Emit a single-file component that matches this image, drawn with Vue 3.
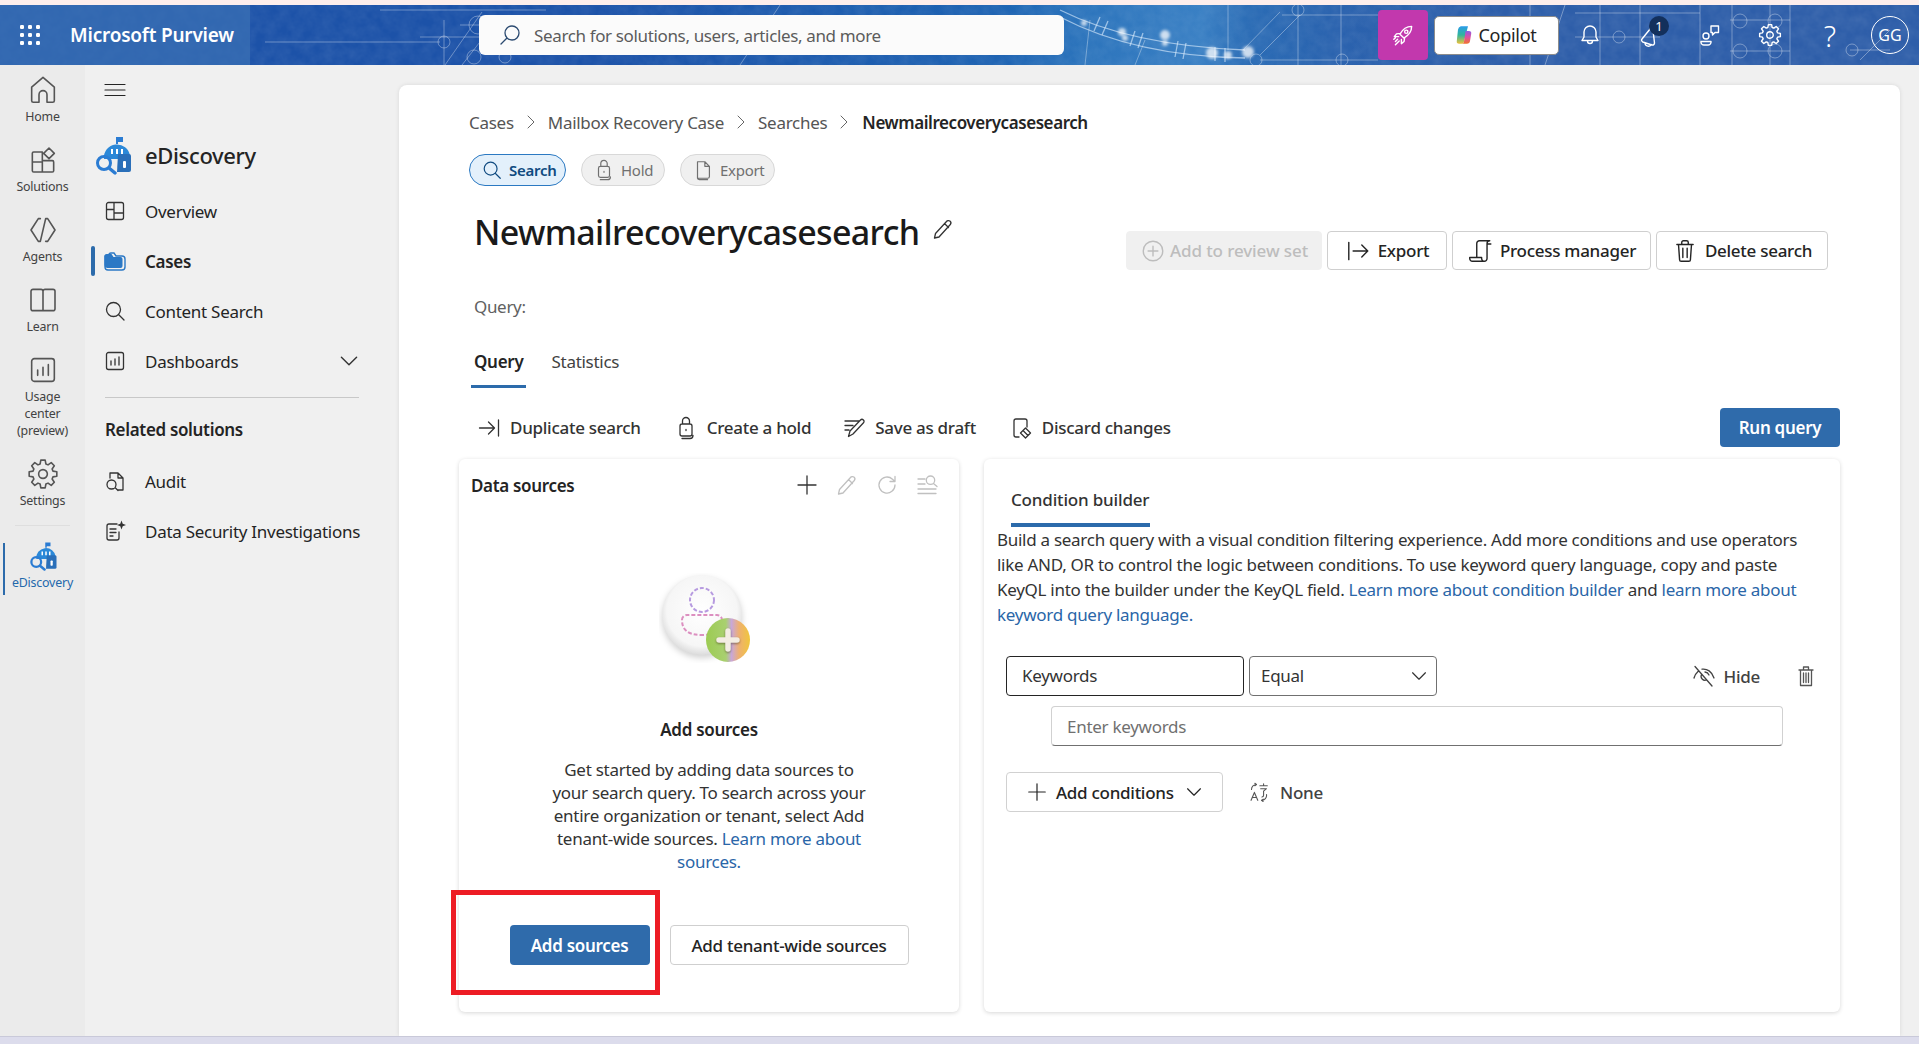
<script setup>
const icons = {
  home: 'M12 2.5 L3.5 9.8 V20 a1.2 1.2 0 0 0 1.2 1.2 H9 V15.5 a3 3 0 0 1 6 0 V21.2 h4.3 a1.2 1.2 0 0 0 1.2-1.2 V9.8 Z',
  solutions: 'M11.5 6 H5 a1 1 0 0 0-1 1 v13 a1 1 0 0 0 1 1 h14 a1 1 0 0 0 1-1 v-6.5 a1 1 0 0 0-1-1 H11.5 Z M4 13.5 h7.5 M11.5 13.5 V21 M16.5 3 l4 4 -4 4 -4-4 Z',
  agents: 'M10 3.5 H8.5 L3 12 L8.5 20.5 H10 L14 3.5 H15.5 L21 12 L15.5 20.5 H14',
  learn: 'M4.5 4 h6 a1.5 1.5 0 0 1 1.5 1.5 V20 H4.5 a1.5 1.5 0 0 1-1.5-1.5 V5.5 A1.5 1.5 0 0 1 4.5 4 Z M19.5 4 h-6 A1.5 1.5 0 0 0 12 5.5 V20 h7.5 a1.5 1.5 0 0 0 1.5-1.5 V5.5 A1.5 1.5 0 0 0 19.5 4 Z',
  usage: 'M5.5 3.5 h13 a2 2 0 0 1 2 2 v13 a2 2 0 0 1-2 2 h-13 a2 2 0 0 1-2-2 v-13 a2 2 0 0 1 2-2 Z M8 16 v-4 M12 16 v-6 M16 16 V8',
  overview: 'M5.5 3.5 h13 a2 2 0 0 1 2 2 v13 a2 2 0 0 1-2 2 h-13 a2 2 0 0 1-2-2 v-13 a2 2 0 0 1 2-2 Z M11 3.5 V20.5 M3.5 10.5 H11 M11 14 H20.5',
  search: 'M10.5 3.5 a7 7 0 1 0 0 14 a7 7 0 0 0 0-14 Z M15.5 15.5 L21 21',
  topSearch: 'M14 3 a7 7 0 1 1 0 14 a7 7 0 0 1 0-14 Z M9 15 L3 21',
  chevDown: 'M5 8.5 L12 15.5 L19 8.5',
  chevRight: 'M8 4 L16 12 L8 20',
  audit: 'M7 9 V4 h8 l5 5 v12 h-5 M15 4 v5 h5 M8.5 11 a4.5 4.5 0 1 0 0 9 a4.5 4.5 0 0 0 0-9 Z M12 18.5 L15 21.5',
  dsi: 'M14 5 H6 a2 2 0 0 0-2 2 v12 a2 2 0 0 0 2 2 h8 a2 2 0 0 0 2-2 v-6 M7 10 h6 M7 13.5 h6 M7 17 h3',
  spark: 'M18.5 1.5 l1.2 3.3 3.3 1.2 -3.3 1.2 -1.2 3.3 -1.2-3.3 -3.3-1.2 3.3-1.2 Z',
  lock: 'M8.5 8 V5 a3.5 3.5 0 0 1 7 0 V8 M8 8 h8 a2 2 0 0 1 2 2 v8 a2 2 0 0 1-2 2 H8 a2 2 0 0 1-2-2 v-8 a2 2 0 0 1 2-2 Z M12 13.5 v1 M8 22.5 h8 a3 3 0 0 0 3-3',
  doc: 'M6 3 h8 l5 5 v11 a2 2 0 0 1-2 2 H6 Z M14 3 v5 h5 M6 19 v1.5 a2 2 0 0 0 2 2 h9',
  pencil: 'M15.5 4.5 a2.4 2.4 0 0 1 3.8 3 L8 20 L3.5 21 L4.5 16.5 Z M13.5 6.5 L17.5 10.5',
  plus: 'M12 3 V21 M3 12 H21',
  plusCircle: 'M12 3 a9 9 0 1 1 0 18 a9 9 0 0 1 0-18 Z M12 7.5 V16.5 M7.5 12 H16.5',
  exportArrow: 'M3.5 4 V20 M7.5 12 H21 M15.5 6.5 L21 12 L15.5 17.5',
  process: 'M9 18 V5 a2.5 2.5 0 0 1 2.5-2.5 H21 a2.5 2.5 0 0 0-2.5 2.5 V19 a2.5 2.5 0 0 1-2.5 2.5 H5 A2.5 2.5 0 0 1 2.5 19 V18 h11 v1 a2.5 2.5 0 0 0 2.5 2.5 M18.5 5.5 H22',
  trash: 'M4.5 6 H19.5 M9 6 V4 a1.5 1.5 0 0 1 1.5-1.5 h3 A1.5 1.5 0 0 1 15 4 V6 M6 6 L7 20 a1.5 1.5 0 0 0 1.5 1.5 h7 A1.5 1.5 0 0 0 17 20 L18 6 M10 9.5 V18 M14 9.5 V18',
  duplicate: 'M2.5 12 H17 M11.5 6 L17.5 12 L11.5 18 M21.5 4 V20',
  draft: 'M3 5 h14 M3 9.5 h8 M3 14 h4 M18.5 4 a2 2 0 0 1 3 2.8 L11 18 L6.5 20.5 L8 15 Z',
  discard: 'M10 21 H7 a2 2 0 0 1-2-2 V5 a2 2 0 0 1 2-2 h9 a2 2 0 0 1 2 2 v6 M16.5 12 l5 5 -5 5 -5-5 Z M14 14.5 l5 5',
  refresh: 'M20 12 a8 8 0 1 1-2.5-5.8 L20 8.5 M20 3.5 V8.5 H15',
  searchList: 'M3 6 h7 M3 11 h7 M3 16 h18 M3 20.5 h18 M15.5 3 a4.2 4.2 0 1 0 0 8.4 a4.2 4.2 0 0 0 0-8.4 Z M18.5 10.5 L22 13.5',
  hide: 'M3 2.5 L20 22 M6 7.5 C3.8 9.5 2.5 11.5 2 14 M10 5.2 C15 4.5 20 7.5 22 14 M9.5 10.5 a4 4 0 0 0 5 5.5 M17 11 a5 5 0 0 0-4-3',
  binFill: 'M5 6 H19 M9.5 6 V3 h5 V6 M6.5 6 V21.5 h11 V6 M9.5 9 V18.5 M12 9 V18.5 M14.5 9 V18.5',
  bell: 'M12 3 a6 6 0 0 1 6 6 v5 l2 3.5 H4 L6 14 V9 a6 6 0 0 1 6-6 Z M9.5 18 a2.5 2.5 0 0 0 5 0',
  mega: 'M14.5 3 L4 16 a2 2 0 0 0 .8 3 L14 22 a2 2 0 0 0 2.5-2 Z M7 20 a3.5 3.5 0 0 0 6.5 1.5',
  feedback: 'M8 10 a3 3 0 1 1 0 6 a3 3 0 0 1 0-6 Z M3 18.5 h10 v1 a3 3 0 0 1-3 2.5 H6 a3 3 0 0 1-3-2.5 Z M13 3 h7.5 v6.5 H17 l-2.5 2.5 V9.5 H13 Z',
  rocket: 'M20 4 c-4.5 0-8.2 2.4-10.8 7.2 l3.6 3.6 C17.6 12.2 20 8.5 20 4 Z M9.5 10.5 L6 11 l-2 2.5 h4 M13.5 14.5 L13 18 l-2.5 2 v-4 M15 7.5 a1.5 1.5 0 1 0 0 3 a1.5 1.5 0 0 0 0-3 Z M7 16 l-2 2 M8.5 17.5 l-3.5 3.5 M5 14.5 l-1.5 1.5',
  none: 'M6.5 12.5 L2.5 22 M6.5 12.5 L10.5 22 M4 18.5 H9 M13 4.5 h9 M17.5 2 v2.5 M14 8 h7 l-3.5 3 M17.5 11 v5 a2 2 0 0 1-2 2 M3 9 a6 6 0 0 1 6-6 M9 3 l-2-1.5 M9 3 l-2 1.5 M21 15 a6 6 0 0 1-6 7 M15 22 l2 1.5 M15 22 l2-1.5',
  hamburger: 'M2 6.5 H22 M2 12 H22 M2 17.5 H22'
}

function gear(cx, cy, rOuter, rInner, teeth) {
  const pts = []
  const step = (Math.PI * 2) / teeth
  for (let i = 0; i < teeth; i++) {
    const a = i * step
    const offs = [[-0.36, rInner], [-0.2, rOuter], [0.2, rOuter], [0.36, rInner]]
    for (const [o, r] of offs) {
      pts.push(`${(cx + r * Math.cos(a + o * step)).toFixed(2)} ${(cy + r * Math.sin(a + o * step)).toFixed(2)}`)
    }
  }
  const hole = rInner * 0.42
  return `M${pts.join(' L')} Z M${cx - hole} ${cy} a${hole} ${hole} 0 1 0 ${hole * 2} 0 a${hole} ${hole} 0 1 0 ${-hole * 2} 0 Z`
}
const gearD = gear(12, 12, 10.5, 7.8, 8)

const railItems = [
  { label: ['Home'], icon: icons.home },
  { label: ['Solutions'], icon: icons.solutions },
  { label: ['Agents'], icon: icons.agents },
  { label: ['Learn'], icon: icons.learn },
  { label: ['Usage', 'center', '(preview)'], icon: icons.usage },
  { label: ['Settings'], icon: gearD }
]

const crumbs = ['Cases', 'Mailbox Recovery Case', 'Searches']

// Blueprint artwork of the banner; coordinates are those of the banner itself.
const bpLines = [
  'M380 5 H546', 'M265 37 H440', 'M445 60 L482 7', 'M462 60 L490 24', 'M444 15 V60',
  'M420 32 H500', 'M460 20 H500', 'M780 0 L740 60',
  'M1228 0 V45', 'M1243 45 L1280 7', 'M1260 50 L1300 10', 'M1298 0 V60', 'M1341 0 V60', 'M1282 10 H1378', 'M1260 55 H1378',
  'M1090 15 L1085 60', 'M1145 35 L1135 60',
  'M1600 0 V60', 'M1640 0 V60', 'M1700 0 V60', 'M1732 0 V60', 'M1770 0 V60', 'M1790 0 V60',
  'M1730 15 H1790', 'M1730 46 H1790', 'M1575 32 H1660', 'M1575 8 H1700',
  'M1860 55 L1890 25', 'M1850 45 H1890', 'M1565 0 L1545 60', 'M1530 0 V60'
]
const bpCircles = [
  [444, 37, 6], [478, 20, 9], [474, 52, 7], [505, 52, 6], [1740, 16, 7], [1775, 16, 7], [1740, 46, 7], [1775, 46, 7],
  [1619, 32, 6], [1852, 45, 6], [1298, 5, 6], [1256, 55, 6], [1342, 55, 6]
]
const bpGlints = [[1084, 18, 3], [1122, 27, 4], [1125, 33, 3], [1165, 30, 5], [1165, 38, 3], [1212, 48, 6], [1228, 50, 4], [1248, 47, 6]]
const bpTies = [
  'M1100 12 l-6 14', 'M1108 16 l-6 14', 'M1135 26 l-5 15', 'M1143 28 l-5 15', 'M1178 36 l-3 16', 'M1186 38 l-3 16',
  'M1215 42 v14', 'M1225 43 v14'
]
</script>

<template>
  <div class="app">
    <div class="strip"></div>

    <header class="header">
      <svg class="blueprint" viewBox="0 0 1919 60" preserveAspectRatio="none" aria-hidden="true">
        <defs>
          <filter id="mottle" x="0" y="0" width="100%" height="100%">
            <feTurbulence type="fractalNoise" baseFrequency="0.09" numOctaves="3" seed="7" />
            <feColorMatrix type="matrix" values="0 0 0 0 1  0 0 0 0 1  0 0 0 0 1  0.5 0 0 0 -0.12" />
          </filter>
          <filter id="soft" x="-50%" y="-50%" width="200%" height="200%">
            <feGaussianBlur stdDeviation="1.4" />
          </filter>
        </defs>
        <rect x="0" y="0" width="1919" height="60" filter="url(#mottle)" class="mottle" />
        <g class="bp">
          <path v-for="(d, i) in bpLines" :key="'l' + i" :d="d" />
          <circle v-for="(c, i) in bpCircles" :key="'c' + i" :cx="c[0]" :cy="c[1]" :r="c[2]" />
        </g>
        <g class="beam">
          <path d="M1060 5 C1110 30 1170 42 1245 45" />
          <path d="M1060 12 C1110 38 1170 52 1245 53" />
          <path v-for="(d, i) in bpTies" :key="'t' + i" :d="d" />
        </g>
        <circle v-for="(g, i) in bpGlints" :key="'g' + i" :cx="g[0]" :cy="g[1]" :r="g[2]" class="glint" filter="url(#soft)" />
      </svg>

      <div class="brand">
        <svg class="waffle" viewBox="0 0 20 20" aria-hidden="true">
          <g>
            <rect v-for="n in 9" :key="n" :x="(n - 1) % 3 * 8" :y="Math.floor((n - 1) / 3) * 8" width="4" height="4" rx="1.2" />
          </g>
        </svg>
        <span class="brand-name">Microsoft Purview</span>
      </div>

      <div class="topsearch">
        <svg class="ic topsearch-ic" viewBox="0 0 24 24"><path :d="icons.topSearch" /></svg>
        <span>Search for solutions, users, articles, and more</span>
      </div>

      <div class="top-actions">
        <div class="rocket">
          <svg class="ic rocket-ic" viewBox="0 0 24 24"><path :d="icons.rocket" /></svg>
        </div>
        <div class="copilot">
          <svg class="copilot-logo" viewBox="0 0 20 24" aria-hidden="true">
            <defs>
              <linearGradient id="cpA" x1="0" y1="0" x2="0" y2="1">
                <stop offset="0" stop-color="#2a9bea" />
                <stop offset="0.5" stop-color="#30b59c" />
                <stop offset="1" stop-color="#efc13a" />
              </linearGradient>
              <linearGradient id="cpB" x1="0" y1="0" x2="0" y2="1">
                <stop offset="0" stop-color="#8e5ce2" />
                <stop offset="0.5" stop-color="#e0509e" />
                <stop offset="1" stop-color="#f0752c" />
              </linearGradient>
            </defs>
            <path d="M6 1 h9 l-5 19 a3 3 0 0 1-3 3 H4 a3 3 0 0 1-3-3.5 L2.5 5 A5 5 0 0 1 6 1 Z" fill="url(#cpA)" />
            <path d="M12 7 h4 a3 3 0 0 1 3 3.5 l-1.5 9 A4 4 0 0 1 13.5 23 H7 a3 3 0 0 0 3-3 Z" fill="url(#cpB)" />
          </svg>
          <span>Copilot</span>
        </div>
        <div class="top-icon"><svg class="ic" viewBox="0 0 24 24"><path :d="icons.bell" /></svg></div>
        <div class="top-icon has-badge">
          <svg class="ic" viewBox="0 0 24 24"><path :d="icons.mega" /></svg>
          <span class="badge">1</span>
        </div>
        <div class="top-icon"><svg class="ic" viewBox="0 0 24 24"><path :d="icons.feedback" /></svg></div>
        <div class="top-icon"><svg class="ic" viewBox="0 0 24 24"><path :d="gearD" /></svg></div>
        <div class="top-icon help">?</div>
        <div class="avatar">GG</div>
      </div>
    </header>

    <div class="body">
      <aside class="rail">
        <div v-for="item in railItems" :key="item.label[0]" class="rail-item">
          <svg class="ic rail-ic" viewBox="0 0 24 24"><path :d="item.icon" /></svg>
          <div class="rail-label">
            <div v-for="l in item.label" :key="l">{{ l }}</div>
          </div>
        </div>
        <div class="rail-sep"></div>
        <div class="rail-item rail-active">
          <span class="rail-bar"></span>
          <svg class="rail-logo" viewBox="0 0 40 40" aria-hidden="true">
            <path d="M23 2 h7 v5 h-5 v2 h-2 Z" fill="#2b7cd3" />
            <path d="M11 24 a13 13 0 0 1 26 -3 v3 Z" fill="#2b88d8" />
            <path d="M25 19 h11 a2 2 0 0 1 2 2 v14 a2 2 0 0 1-2 2 H24 Z" fill="#2a6fb9" />
            <path d="M19 14 v5 M24 14 v5 M29 14 v5" class="logo-lines" />
            <rect x="30" y="26" width="3" height="7" rx="1" fill="#fff" />
            <circle cx="11" cy="28" r="6.5" class="logo-lens" />
            <path d="M16 33 L22 38" class="logo-handle" />
          </svg>
          <div class="rail-label rail-label-active">eDiscovery</div>
        </div>
      </aside>

      <nav class="nav">
        <svg class="ic hamburger" viewBox="0 0 24 24"><path :d="icons.hamburger" /></svg>
        <div class="nav-title">
          <svg class="nav-logo" viewBox="0 0 40 40" aria-hidden="true">
            <path d="M23 2 h7 v5 h-5 v2 h-2 Z" fill="#2b7cd3" />
            <path d="M11 24 a13 13 0 0 1 26 -3 v3 Z" fill="#2b88d8" />
            <path d="M25 19 h11 a2 2 0 0 1 2 2 v14 a2 2 0 0 1-2 2 H24 Z" fill="#2a6fb9" />
            <path d="M19 14 v5 M24 14 v5 M29 14 v5" class="logo-lines" />
            <rect x="30" y="26" width="3" height="7" rx="1" fill="#fff" />
            <circle cx="11" cy="28" r="6.5" class="logo-lens" />
            <path d="M16 33 L22 38" class="logo-handle" />
          </svg>
          <span>eDiscovery</span>
        </div>
        <div class="nav-item">
          <svg class="ic nav-ic" viewBox="0 0 24 24"><path :d="icons.overview" /></svg>
          <span>Overview</span>
        </div>
        <div class="nav-item active">
          <span class="nav-bar"></span>
          <svg class="nav-ic" viewBox="0 0 24 24" aria-hidden="true">
            <path d="M6 6 a2 2 0 0 1 2 -2 h3 l2 3 h6 a3 3 0 0 1 3 3 v8 a3 3 0 0 1-3 3 H5 a3 3 0 0 1-3-3 V7 Z" fill="none" stroke="#2b78c5" stroke-width="1.4" />
            <path d="M1.5 7 a2 2 0 0 1 2-2 h5 l2 3 h7 a2 2 0 0 1 2 2 v7 a2 2 0 0 1-2 2 H4 a3 3 0 0 1-2.5-3 Z" fill="#2b78c5" />
          </svg>
          <span>Cases</span>
        </div>
        <div class="nav-item">
          <svg class="ic nav-ic" viewBox="0 0 24 24"><path :d="icons.search" /></svg>
          <span>Content Search</span>
        </div>
        <div class="nav-item">
          <svg class="ic nav-ic" viewBox="0 0 24 24"><path :d="icons.usage" /></svg>
          <span>Dashboards</span>
          <svg class="ic nav-chev" viewBox="0 0 24 24"><path :d="icons.chevDown" /></svg>
        </div>
        <div class="nav-sep"></div>
        <div class="nav-head">Related solutions</div>
        <div class="nav-item nav-after-head">
          <svg class="ic nav-ic" viewBox="0 0 24 24"><path :d="icons.audit" /></svg>
          <span>Audit</span>
        </div>
        <div class="nav-item">
          <svg class="ic nav-ic" viewBox="0 0 24 24"><path :d="icons.dsi" /><path :d="icons.spark" class="solid" /></svg>
          <span>Data Security Investigations</span>
        </div>
      </nav>

      <main class="card">
        <div class="crumbs">
          <template v-for="c in crumbs" :key="c">
            <span>{{ c }}</span>
            <svg class="ic crumb-sep" viewBox="0 0 24 24"><path :d="icons.chevRight" /></svg>
          </template>
          <span class="crumb-cur">Newmailrecoverycasesearch</span>
        </div>

        <div class="pills">
          <div class="pill pill-on">
            <svg class="ic pill-ic" viewBox="0 0 24 24"><path :d="icons.search" /></svg>
            <span>Search</span>
          </div>
          <div class="pill pill-hold">
            <svg class="ic pill-ic" viewBox="0 0 24 24"><path :d="icons.lock" /></svg>
            <span>Hold</span>
          </div>
          <div class="pill pill-exp">
            <svg class="ic pill-ic" viewBox="0 0 24 24"><path :d="icons.doc" /></svg>
            <span>Export</span>
          </div>
        </div>

        <div class="title-row">
          <h1 class="title">Newmailrecoverycasesearch</h1>
          <svg class="ic title-pen" viewBox="0 0 24 24"><path :d="icons.pencil" /></svg>
          <div class="actions">
            <button class="btn btn-disabled">
              <svg class="ic btn-ic" viewBox="0 0 24 24"><path :d="icons.plusCircle" /></svg>
              Add to review set
            </button>
            <button class="btn btn-export">
              <svg class="ic btn-ic" viewBox="0 0 24 24"><path :d="icons.exportArrow" /></svg>
              Export
            </button>
            <button class="btn btn-process">
              <svg class="ic btn-ic" viewBox="0 0 24 24"><path :d="icons.process" /></svg>
              Process manager
            </button>
            <button class="btn btn-delete">
              <svg class="ic btn-ic" viewBox="0 0 24 24"><path :d="icons.trash" /></svg>
              Delete search
            </button>
          </div>
        </div>

        <div class="query-label">Query:</div>

        <div class="tabs">
          <div class="tab tab-on">Query</div>
          <div class="tab">Statistics</div>
        </div>

        <div class="toolbar">
          <div class="tool tool-dup">
            <svg class="ic tool-ic" viewBox="0 0 24 24"><path :d="icons.duplicate" /></svg>
            <span>Duplicate search</span>
          </div>
          <div class="tool tool-hold">
            <svg class="ic tool-ic" viewBox="0 0 24 24"><path :d="icons.lock" /></svg>
            <span>Create a hold</span>
          </div>
          <div class="tool tool-draft">
            <svg class="ic tool-ic" viewBox="0 0 24 24"><path :d="icons.draft" /></svg>
            <span>Save as draft</span>
          </div>
          <div class="tool tool-discard">
            <svg class="ic tool-ic" viewBox="0 0 24 24"><path :d="icons.discard" /></svg>
            <span>Discard changes</span>
          </div>
          <button class="run">Run query</button>
        </div>

        <div class="panels">
          <section class="panel panel-left">
            <div class="panel-head">
              <span class="panel-title">Data sources</span>
              <div class="panel-tools">
                <svg class="ic ptool dark" viewBox="0 0 24 24"><path :d="icons.plus" /></svg>
                <svg class="ic ptool" viewBox="0 0 24 24"><path :d="icons.pencil" /></svg>
                <svg class="ic ptool" viewBox="0 0 24 24"><path :d="icons.refresh" /></svg>
                <svg class="ic ptool" viewBox="0 0 24 24"><path :d="icons.searchList" /></svg>
              </div>
            </div>

            <svg class="art" viewBox="0 0 100 90" aria-hidden="true">
              <defs>
                <radialGradient id="disc" cx="0.5" cy="0.45" r="0.55">
                  <stop offset="0" stop-color="#ffffff" />
                  <stop offset="0.8" stop-color="#f6f6f6" />
                  <stop offset="1" stop-color="#dcdcdc" />
                </radialGradient>
                <linearGradient id="badge" x1="0" y1="0" x2="1" y2="0">
                  <stop offset="0" stop-color="#9ccb52" />
                  <stop offset="0.45" stop-color="#a9d070" />
                  <stop offset="0.58" stop-color="#c9a7d8" />
                  <stop offset="0.75" stop-color="#eeb070" />
                  <stop offset="1" stop-color="#f0c63c" />
                </linearGradient>
              </defs>
              <circle cx="43" cy="42" r="40" fill="url(#disc)" class="art-disc" />
              <circle cx="43" cy="27" r="12" class="dash-purple" />
              <path d="M23 47 a5 5 0 0 1 5-5 h30 a5 5 0 0 1 5 5 c0 10-6 15-20 15 s-20-5-20-15 Z" class="dash-pink" />
              <circle cx="69" cy="67" r="22" fill="url(#badge)" />
              <path d="M69 58 V76 M60 67 H78" class="art-plus" />
            </svg>

            <div class="src-title">Add sources</div>
            <p class="src-text">
              Get started by adding data sources to<br />
              your search query. To search across your<br />
              entire organization or tenant, select Add<br />
              tenant-wide sources. <a class="link">Learn more about<br />sources.</a>
            </p>
            <div class="src-btns">
              <button class="primary">Add sources</button>
              <button class="secondary">Add tenant-wide sources</button>
            </div>
            <div class="callout"></div>
          </section>

          <section class="panel panel-right">
            <div class="cb-tab">Condition builder</div>
            <p class="cb-text">
              Build a search query with a visual condition filtering experience. Add more conditions and use operators<br />
              like AND, OR to control the logic between conditions. To use keyword query language, copy and paste<br />
              KeyQL into the builder under the KeyQL field. <a class="link">Learn more about condition builder</a> and <a class="link">learn more about<br />keyword query language.</a>
            </p>
            <div class="cond-row">
              <div class="field field-key">Keywords</div>
              <div class="field field-op">
                <span>Equal</span>
                <svg class="ic op-chev" viewBox="0 0 24 24"><path :d="icons.chevDown" /></svg>
              </div>
              <div class="hide">
                <svg class="ic hide-ic" viewBox="0 0 24 24"><path :d="icons.hide" /></svg>
                <span>Hide</span>
              </div>
              <svg class="ic bin" viewBox="0 0 24 24"><path :d="icons.binFill" /></svg>
            </div>
            <div class="keywords">Enter keywords</div>
            <div class="add-row">
              <button class="add-cond">
                <svg class="ic add-plus" viewBox="0 0 24 24"><path :d="icons.plus" /></svg>
                <span>Add conditions</span>
                <svg class="ic add-chev" viewBox="0 0 24 24"><path :d="icons.chevDown" /></svg>
              </button>
              <svg class="ic none-ic" viewBox="0 0 24 24"><path :d="icons.none" /></svg>
              <span class="none-label">None</span>
            </div>
          </section>
        </div>
      </main>
    </div>

    <div class="bottom"></div>
  </div>
</template>

<style>
html, body { margin: 0; padding: 0; background: #f0f0f0; }
</style>

<style scoped>
.app {
  width: 1919px;
  height: 1044px;
  overflow: hidden;
  display: flex;
  flex-direction: column;
  background: #f0f0f0;
  font-family: "Noto Sans", "Open Sans", sans-serif;
  font-size: 17px;
  letter-spacing: -0.28px;
  color: #242424;
}
.ic { fill: none; stroke: currentColor; stroke-width: 1.3; stroke-linejoin: round; stroke-linecap: round; display: block; flex: none; }
.solid { fill: currentColor; stroke: none; }
button { font: inherit; letter-spacing: inherit; color: inherit; cursor: default; }

.strip { height: 5px; background: #fdeeec; flex: none; }

.header {
  position: relative;
  flex: none;
  height: 60px;
  display: flex;
  align-items: center;
  background: linear-gradient(90deg, #1c52a8 0, #1c52a8 600px, #1e63b2 1000px, #2c74bc 1080px, #3a80c4 1200px, #2b6cb5 1250px, #2a62ae 1340px, #2e5ea9 1500px, #2e5ea9 100%);
  color: #fff;
}
.blueprint { position: absolute; inset: 0; width: 100%; height: 100%; }
.mottle { opacity: 0.22; }
.bp { fill: none; stroke: rgba(255, 255, 255, 0.34); stroke-width: 1; }
.beam { fill: none; stroke: rgba(225, 240, 255, 0.6); stroke-width: 1.3; }
.glint { fill: rgba(255, 255, 255, 0.75); }

.brand {
  position: relative;
  width: 250px;
  height: 100%;
  flex: none;
  display: flex;
  align-items: center;
  background: rgba(58, 112, 180, 0.72);
}
.waffle { width: 20px; height: 20px; margin-left: 20px; fill: #fff; }
.brand-name { margin-left: 30px; font-size: 19px; font-weight: 600; letter-spacing: -0.2px; }

.topsearch {
  position: relative;
  margin-left: 229px;
  width: 585px;
  height: 40px;
  border-radius: 6px;
  background: #fbfbfb;
  display: flex;
  align-items: center;
  color: #5c5c5c;
  font-size: 17px;
  letter-spacing: -0.36px;
  flex: none;
}
.topsearch-ic { width: 24px; height: 24px; margin-left: 19px; margin-right: 12px; color: #2b4a70; }

.top-actions { position: relative; flex: 1; display: flex; align-items: center; height: 100%; margin-left: 314px; }
.rocket { width: 50px; height: 50px; background: #c238ad; border-radius: 4px; display: flex; align-items: center; justify-content: center; flex: none; }
.rocket-ic { width: 26px; height: 26px; color: #fff; }
.copilot {
  width: 125px; height: 39px; margin-left: 6px; box-sizing: border-box; background: #fff;
  border: 1px solid #8c8c8c; border-radius: 5px; display: flex; align-items: center; justify-content: center;
  color: #242424; font-size: 18px; flex: none; gap: 6px;
}
.copilot-logo { width: 16px; height: 20px; }
.top-icon { position: relative; width: 60px; flex: none; display: flex; justify-content: center; align-items: center; color: #fff; }
.top-icon .ic { width: 24px; height: 24px; stroke-width: 1.4; }
.copilot + .top-icon { margin-left: 1px; }
.help { font-size: 29px; font-weight: 300; line-height: 1; letter-spacing: 0; }
.badge {
  position: absolute; left: 29px; top: -7px; width: 20px; height: 20px; border-radius: 50%; background: #13305c;
  color: #fff; font-size: 13px; line-height: 20px; text-align: center; letter-spacing: 0;
}
.avatar {
  margin-left: 11px; width: 38px; height: 38px; box-sizing: border-box; border: 1px solid #fff; border-radius: 50%;
  display: flex; align-items: center; justify-content: center; font-size: 16px; letter-spacing: 0; flex: none;
}

.body { flex: 1; min-height: 0; display: flex; }

.rail { width: 85px; flex: none; background: #ebebeb; color: #424242; }
.rail-item { position: relative; padding: 10px 0 10px; display: flex; flex-direction: column; align-items: center; }
.rail-ic { width: 32px; height: 32px; margin: -1px 0; color: #555; stroke-width: 1.2; }
.rail-label { margin-top: 3px; font-size: 12.4px; line-height: 17px; text-align: center; letter-spacing: -0.2px; }
.rail-sep { height: 1px; margin: 6px 15px 7px; background: #dedede; }
.rail-active { padding-top: 8px; }
.rail-bar { position: absolute; left: 3px; top: 10px; bottom: 6px; width: 2px; background: #2c6bab; }
.rail-logo { width: 30px; height: 30px; }
.rail-label-active { color: #2368ab; }
.logo-lines { fill: none; stroke: #fff; stroke-width: 2; }
.logo-lens { fill: none; stroke: #2b7cd3; stroke-width: 3; }
.logo-handle { fill: none; stroke: #2b7cd3; stroke-width: 3.4; stroke-linecap: round; }

.nav { width: 314px; flex: none; background: #f0f0f0; box-sizing: border-box; padding-left: 20px; color: #242424; }
.hamburger { width: 24px; height: 24px; margin: 13px 0 0 -2px; stroke-width: 1.2; stroke: #242424; }
.nav-title { display: flex; align-items: center; height: 40px; margin-top: 33px; margin-left: -12px; font-size: 22px; font-weight: 500; letter-spacing: -0.35px; }
.nav-logo { width: 40px; height: 40px; margin-right: 12px; flex: none; }
.nav-item { position: relative; height: 50px; display: flex; align-items: center; color: #242424; }
.nav-title + .nav-item { margin-top: 11px; }
.nav-ic { width: 24px; height: 24px; margin-left: -2px; margin-right: 18px; color: #333; flex: none; }
.nav-item.active { font-weight: 600; }
.nav-bar { position: absolute; left: -14px; top: 10px; width: 4px; height: 30px; border-radius: 2px; background: #2c6bab; }
.nav-chev { width: 26px; height: 26px; margin-left: auto; margin-right: 37px; color: #333; }
.nav-sep { height: 1px; background: #c8c8c8; margin: 11px 40px 0 0; width: 254px; }
.nav-head { height: 50px; margin-top: 6px; display: flex; align-items: center; font-weight: 600; letter-spacing: -0.33px; }
.nav-after-head { margin-top: 2px; }

.card {
  flex: none;
  width: 1501px;
  margin-top: 20px;
  box-sizing: border-box;
  padding: 25px 60px 0 70px;
  background: #fff;
  border-radius: 8px 8px 0 0;
  box-shadow: 0 0 4px rgba(0, 0, 0, 0.1);
}
.crumbs { display: flex; align-items: center; height: 24px; color: #555; }
.crumb-sep { width: 18px; height: 18px; margin: 0 8px; color: #555; stroke-width: 1.2; }
.crumb-cur { color: #242424; font-weight: 600; letter-spacing: -0.43px; margin-left: 1px; }

.pills { display: flex; margin-top: 20px; gap: 15px; }
.pill {
  height: 32px; box-sizing: border-box; padding: 0 0 0 11px; display: flex; align-items: center; gap: 6px; border-radius: 16px;
  border: 1px solid #d8d8d8; background: #f0f0f0; color: #707070; font-size: 15px;
}
.pill-ic { width: 22px; height: 22px; }
.pill-on { width: 97px; border-color: #2b79c2; background: #e3f0fb; color: #0f4a80; font-weight: 600; }
.pill-hold { width: 84px; }
.pill-exp { width: 95px; }

.title-row { display: flex; margin-top: 22px; height: 62px; padding-top: 1px; box-sizing: border-box; }
.title { margin: 0 0 0 5px; font-size: 34px; font-weight: 500; line-height: 46px; letter-spacing: -0.66px; color: #1a1a1a; }
.title-pen { width: 24px; height: 24px; margin: 8px 0 0 12px; color: #333; }
.actions { margin-left: auto; margin-right: 12px; margin-top: 22px; display: flex; gap: 5px; height: 39px; }
.btn {
  box-sizing: border-box; height: 39px; display: flex; align-items: center; justify-content: center; gap: 7px; padding: 0;
  border: 1px solid #cfcfcf; border-radius: 4px; background: #fff; color: #242424; font-size: 17px; font-weight: 500;
}
.btn-ic { width: 26px; height: 26px; }
.btn-disabled { width: 196px; background: #f0f0f0; border-color: #f0f0f0; color: #bdbdbd; font-weight: 500; gap: 4px; letter-spacing: -0.1px; }
.btn-export { width: 120px; }
.btn-process { width: 199px; }
.btn-delete { width: 172px; }

.query-label { margin: 25px 0 0 5px; line-height: 24px; color: #616161; letter-spacing: -0.33px; }

.tabs { display: flex; margin: 31px 0 0 2px; gap: 22px; }
.tab { padding: 0 3px 14px; line-height: 24px; color: #424242; }
.tab-on { color: #242424; font-weight: 600; border-bottom: 3px solid #2c6bab; padding-bottom: 11px; }

.toolbar { display: flex; align-items: center; height: 39px; margin-top: 20px; font-weight: 500; color: #333; }
.tool { display: flex; align-items: center; gap: 9px; }
.tool-ic { width: 24px; height: 24px; }
.tool-dup { margin-left: 8px; }
.tool-hold { margin-left: 33px; }
.tool-draft { margin-left: 31px; }
.tool-discard { margin-left: 33px; }
.run {
  margin-left: auto; width: 120px; height: 39px; border: none; border-radius: 4px; background: #2f6bab; color: #fff; font-weight: 600;
}

.panels { display: flex; gap: 25px; margin: 12px 0 0 -10px; height: 553px; }
.panel { position: relative; box-sizing: border-box; background: #fff; border-radius: 6px; box-shadow: 0 1px 4px rgba(0, 0, 0, 0.16); }
.panel-left { width: 500px; flex: none; display: flex; flex-direction: column; align-items: center; }
.panel-right { flex: 1; min-width: 0; }

.panel-head { align-self: stretch; display: flex; align-items: center; justify-content: space-between; height: 24px; padding: 14px 12px 1px 12px; }
.panel-title { font-weight: 600; color: #242424; letter-spacing: -0.33px; }
.panel-tools { display: flex; margin-top: -1px; }
.ptool { width: 24px; height: 24px; padding: 0 8px; color: #c0c0c0; }
.ptool.dark { color: #333; }

.art { width: 100px; height: 90px; margin-top: 75px; flex: none; }
.art-disc { filter: drop-shadow(0 3px 3px rgba(0, 0, 0, 0.18)); }
.dash-purple { fill: none; stroke: #b79be0; stroke-width: 2; stroke-dasharray: 4 2; }
.dash-pink { fill: none; stroke: #dc8fc0; stroke-width: 2; stroke-dasharray: 4 2; }
.art-plus { fill: none; stroke: #f3ede3; stroke-width: 5.5; stroke-linecap: round; filter: drop-shadow(0 1.5px 1px rgba(60, 50, 20, 0.55)); }

.src-title { margin-top: 55px; line-height: 24px; font-weight: 600; }
.src-text { margin: 16px 0 0; text-align: center; line-height: 23px; color: #333; }
.link { color: #2a66a8; }
.src-btns { display: flex; gap: 20px; margin-top: 52px; }
.primary { width: 140px; height: 40px; border: none; border-radius: 4px; background: #2f6bab; color: #fff; font-weight: 600; }
.secondary { width: 239px; height: 40px; border: 1px solid #cfcfcf; border-radius: 4px; background: #fff; font-weight: 500; color: #242424; }
.callout { position: absolute; left: -8px; top: 431px; width: 209px; height: 105px; box-sizing: border-box; border: 5px solid #ed1c24; pointer-events: none; }

.cb-tab {
  display: block; box-sizing: border-box; margin: 29px 0 0 27px; line-height: 24px; padding-bottom: 11px; border-bottom: 4px solid #2c6bab;
  width: 139px; font-weight: 500; color: #333; white-space: nowrap; letter-spacing: -0.18px;
}
.cb-text { margin: 0 0 0 13px; line-height: 25px; color: #333; white-space: nowrap; }

.cond-row { display: flex; align-items: center; margin: 29px 22px 0 22px; height: 40px; gap: 5px; }
.field { box-sizing: border-box; height: 40px; display: flex; align-items: center; border-radius: 4px; padding: 0 15px 2px; color: #333; }
.field-key { width: 238px; border: 1.5px solid #242424; }
.field-op { width: 188px; border: 1px solid #707070; padding: 0 6px 1px 11px; justify-content: space-between; }
.op-chev { width: 22px; height: 22px; }
.hide { margin-left: auto; margin-right: 29px; display: flex; align-items: center; gap: 8px; font-weight: 500; color: #424242; }
.hide-ic { width: 24px; height: 24px; }
.bin { width: 24px; height: 24px; color: #555; }

.keywords {
  box-sizing: border-box; width: 732px; height: 40px; margin: 10px 0 0 67px; padding: 0 15px; display: flex; align-items: center;
  border: 1px solid #d1d1d1; border-bottom-color: #707070; border-radius: 4px; color: #707070;
}

.add-row { display: flex; align-items: center; margin: 26px 0 0 22px; }
.add-cond {
  width: 217px; height: 40px; box-sizing: border-box; display: flex; align-items: center; padding: 0 0 0 19px; gap: 8px;
  border: 1px solid #d1d1d1; border-radius: 4px; background: #fff; color: #242424; font-weight: 500;
}
.add-plus { width: 22px; height: 22px; }
.add-chev { width: 22px; height: 22px; margin-left: 1px; }
.none-ic { width: 20px; height: 20px; margin-left: 26px; color: #555; }
.none-label { margin-left: 11px; font-weight: 500; color: #424242; }

.bottom { height: 8px; flex: none; background: #dcdcec; border-top: 1px solid #c9c9d9; box-sizing: border-box; position: relative; }
</style>
